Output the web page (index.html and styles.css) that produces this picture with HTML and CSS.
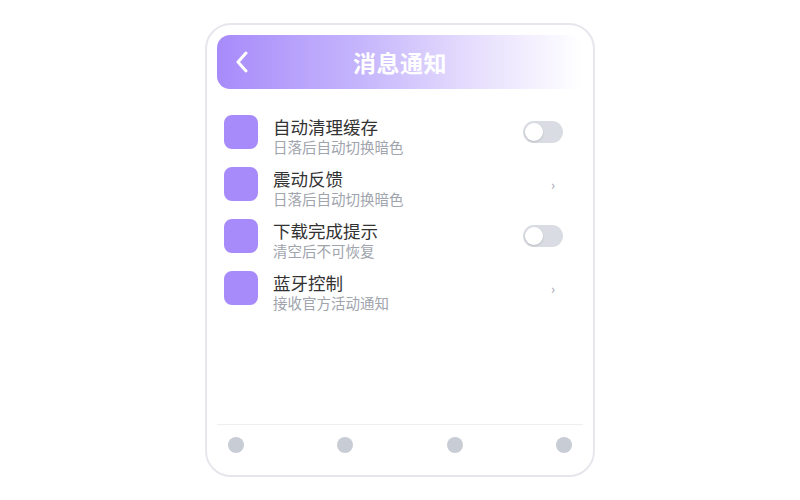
FILE: index.html
```html
<!DOCTYPE html>
<html lang="zh-CN">
<head>
  <meta charset="UTF-8">
  <meta name="viewport" content="width=device-width, initial-scale=1.0">
  <title>消息通知</title>
  <link rel="stylesheet" href="styles.css">
</head>
<body>
  <div class="phone">
    <header class="topbar">
      <span class="voltar">
        <svg width="14" height="22" viewBox="0 0 14 22"><path d="M11 2 L3 11 L11 20" fill="none" stroke="#fff" stroke-width="3" stroke-linecap="round" stroke-linejoin="round"/></svg>
      </span>
      <h1>消息通知</h1>
      <span></span>
    </header>

    <div class="lista">
      <div class="item">
        <div class="icone"></div>
        <div class="textos">
          <div class="titulo">自动清理缓存</div>
          <div class="sub">日落后自动切换暗色</div>
        </div>
        <div class="toggle"><span></span></div>
      </div>
      <div class="item">
        <div class="icone"></div>
        <div class="textos">
          <div class="titulo">震动反馈</div>
          <div class="sub">日落后自动切换暗色</div>
        </div>
        <div class="seta">›</div>
      </div>
      <div class="item">
        <div class="icone"></div>
        <div class="textos">
          <div class="titulo">下载完成提示</div>
          <div class="sub">清空后不可恢复</div>
        </div>
        <div class="toggle"><span></span></div>
      </div>
      <div class="item">
        <div class="icone"></div>
        <div class="textos">
          <div class="titulo">蓝牙控制</div>
          <div class="sub">接收官方活动通知</div>
        </div>
        <div class="seta">›</div>
      </div>
    </div>

    <footer class="rodape">
      <span class="ponto"></span>
      <span class="ponto"></span>
      <span class="ponto"></span>
      <span class="ponto"></span>
    </footer>
  </div>
</body>
</html>
```

FILE: styles.css
```css
body {
  margin: 0;
  padding-top: 23px;
  background-color: #fff;
  font-family: "Noto Sans CJK SC", "Noto Sans", sans-serif;
  display: flex;
  justify-content: center;
}
.phone {
  width: 390px;
  height: 454px;
  box-sizing: border-box;
  border: 2px solid #e6e7ec;
  border-radius: 26px;
  padding: 10px;
  display: flex;
  flex-direction: column;
}
.topbar {
  height: 54px;
  border-radius: 13px;
  background: linear-gradient(90deg, #a78bfa 0%, #c6b6fc 40%, #e6defd 70%, #fff 100%);
  display: grid;
  grid-template-columns: 1fr auto 1fr;
  align-items: center;
}
.voltar {
  display: flex;
  padding-left: 18px;
}
.topbar h1 {
  margin: 0;
  color: #fff;
  font-size: 23px;
  font-weight: bold;
  letter-spacing: 0.5px;
}
.lista {
  margin-top: 17px;
}
.item {
  height: 52px;
  box-sizing: border-box;
  display: flex;
  align-items: center;
  padding: 0 20px 0 7px;
}
.icone {
  width: 34px;
  height: 34px;
  border-radius: 8px;
  background-color: #a78bfa;
  flex-shrink: 0;
}
.textos {
  flex: 1;
  margin-left: 15px;
  margin-top: 8px;
}
.titulo {
  font-size: 17.5px;
  line-height: 20px;
  color: #333;
}
.sub {
  font-size: 14.5px;
  line-height: 19px;
  color: #a0a4ad;
}
.toggle {
  width: 40px;
  height: 22px;
  box-sizing: border-box;
  border-radius: 11px;
  background-color: #d9dce3;
  padding: 2px;
  display: flex;
}
.toggle span {
  width: 18px;
  height: 18px;
  border-radius: 50%;
  background-color: #fff;
  box-shadow: 0 1px 2px rgba(0,0,0,0.15);
}
.seta {
  font-size: 13px;
  color: #9ca3af;
  margin-right: 8px;
}
.rodape {
  margin-top: auto;
  border-top: 1px solid #eeeff3;
  padding: 12px 11px;
  display: flex;
  justify-content: space-between;
}
.ponto {
  width: 16px;
  height: 16px;
  border-radius: 50%;
  background-color: #c8ccd4;
}
```
